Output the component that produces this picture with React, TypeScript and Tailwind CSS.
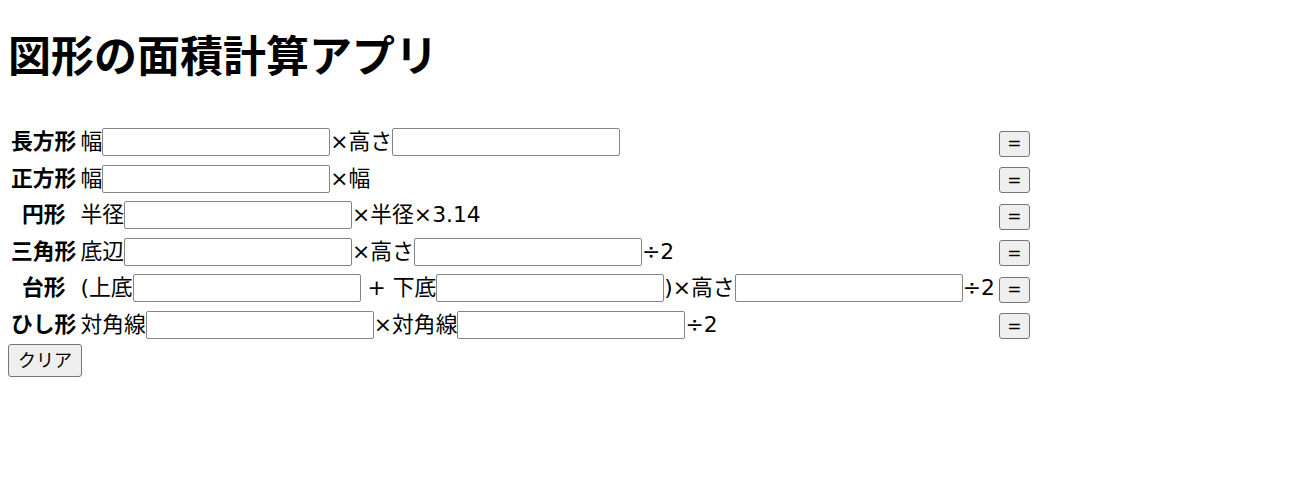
import React from "react";

const font = "font-['DejaVu_Sans','Noto_Sans_CJK_JP',sans-serif]";

function Field() {
  return (
    <input
      type="text"
      className="w-[228px] h-[28px] shrink-0 border border-[#858585] rounded-[2px] bg-white px-0.5 outline-none"
    />
  );
}

function Eq() {
  return (
    <button className="w-[31px] h-[26px] border border-[#767676] rounded-[3px] bg-[#efefef] text-[17px] leading-none text-black">
      =
    </button>
  );
}

type Row = { label: string; body: React.ReactNode };

const rows: Row[] = [
  {
    label: "長方形",
    body: (
      <>
        幅<Field />×高さ<Field />
      </>
    ),
  },
  {
    label: "正方形",
    body: (
      <>
        幅<Field />×幅
      </>
    ),
  },
  {
    label: "円形",
    body: (
      <>
        半径<Field />×半径×3.14
      </>
    ),
  },
  {
    label: "三角形",
    body: (
      <>
        底辺<Field />×高さ<Field />÷2
      </>
    ),
  },
  {
    label: "台形",
    body: (
      <>
        (上底<Field />
        <span className="whitespace-pre"> + </span>下底<Field />)×高さ<Field />÷2
      </>
    ),
  },
  {
    label: "ひし形",
    body: (
      <>
        対角線<Field />×対角線<Field />÷2
      </>
    ),
  },
];

export default function App() {
  return (
    <div className={`${font} bg-white text-black p-2 min-h-screen`}>
      <h1 className="mt-[24px] mb-[41px] text-[43px] leading-[50px] font-bold">
        図形の面積計算アプリ
      </h1>

      <table className="border-separate border-spacing-[2px] text-[21.8px] leading-[28px]">
        <tbody>
          {rows.map((r) => (
            <tr key={r.label} className="h-[34.5px]">
              <th className="p-px font-bold text-center whitespace-nowrap">{r.label}</th>
              <td className="p-px">
                <div className="flex items-center whitespace-nowrap">{r.body}</div>
              </td>
              <td className="p-px">
                <Eq />
              </td>
            </tr>
          ))}
        </tbody>
      </table>

      <button className="block w-[74px] h-[33px] border border-[#767676] rounded-[3px] bg-[#efefef] text-[18px] leading-none">
        クリア
      </button>
    </div>
  );
}
